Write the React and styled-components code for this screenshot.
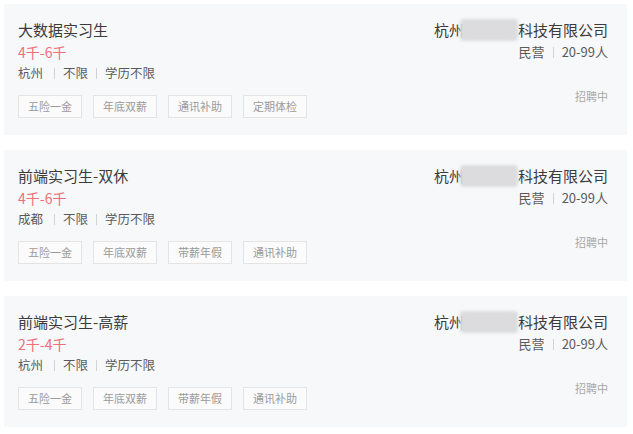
import React from "react";
import styled, { createGlobalStyle } from "styled-components";

const GlobalStyle = createGlobalStyle`
  body {
    margin: 0;
    background: #ffffff;
    font-family: "Noto Sans CJK SC", "Noto Sans", "Liberation Sans", sans-serif;
  }
`;

const jobs = [
  {
    title: "大数据实习生",
    salary: "4千-6千",
    city: "杭州",
    tags: ["五险一金", "年底双薪", "通讯补助", "定期体检"],
  },
  {
    title: "前端实习生-双休",
    salary: "4千-6千",
    city: "成都",
    tags: ["五险一金", "年底双薪", "带薪年假", "通讯补助"],
  },
  {
    title: "前端实习生-高薪",
    salary: "2千-4千",
    city: "杭州",
    tags: ["五险一金", "年底双薪", "带薪年假", "通讯补助"],
  },
];

export default function App() {
  return (
    <>
      <GlobalStyle />
      <List>
        {jobs.map((job, i) => (
          <Card key={i}>
            <Left>
              <Title>{job.title}</Title>
              <Salary>{job.salary}</Salary>
              <Meta>
                <span>{job.city}</span>
                <Sep $wide />
                <span>不限</span>
                <Sep />
                <span>学历不限</span>
              </Meta>
              <Tags>
                {job.tags.map((t) => (
                  <Tag key={t}>{t}</Tag>
                ))}
              </Tags>
            </Left>
            <Right>
              <Company>
                杭州
                <Blur />
                科技有限公司
              </Company>
              <CompanyMeta>
                民营
                <Sep />
                20-99人
              </CompanyMeta>
              <Status>招聘中</Status>
            </Right>
          </Card>
        ))}
      </List>
    </>
  );
}

const List = styled.div`
  display: flex;
  flex-direction: column;
  gap: 15px;
  padding: 4px 6px 0 4px;
`;

const Card = styled.div`
  display: flex;
  justify-content: space-between;
  height: 131px;
  box-sizing: border-box;
  padding: 15px 19px 0 14px;
  background: #f7f8fa;
`;

const Left = styled.div`
  display: flex;
  flex-direction: column;
`;

const Title = styled.div`
  font-size: 15px;
  line-height: 22px;
  color: #3b3b3b;
`;

const Salary = styled.div`
  font-size: 14px;
  line-height: 22px;
  color: #f06e78;
`;

const Meta = styled.div`
  display: flex;
  align-items: center;
  font-size: 12.5px;
  line-height: 20px;
  color: #5a5a5a;
`;

const Sep = styled.i`
  display: inline-block;
  width: 1px;
  height: 11px;
  margin: ${(p) => (p.$wide ? "0 8px 0 11px" : "0 8px")};
  background: #d2d2d2;
`;

const Tags = styled.div`
  display: flex;
  gap: 11px;
  margin-top: 12px;
`;

const Tag = styled.span`
  height: 23px;
  box-sizing: border-box;
  padding: 0 9px;
  border: 1px solid #e4e4e4;
  background: #fbfbfc;
  font-size: 11px;
  line-height: 21px;
  color: #9a9a9a;
`;

const Right = styled.div`
  display: flex;
  flex-direction: column;
  align-items: flex-end;
`;

const Company = styled.div`
  display: flex;
  align-items: center;
  font-size: 15px;
  line-height: 22px;
  color: #3b3b3b;
`;

const Blur = styled.span`
  display: inline-block;
  width: 58px;
  height: 22px;
  margin: 0 0 0 -4px;
  border-radius: 4px;
  background: #dcdcde;
  filter: blur(1.5px);
`;

const CompanyMeta = styled.div`
  display: flex;
  align-items: center;
  font-size: 13px;
  line-height: 22px;
  color: #5a5a5a;
`;

const Status = styled.div`
  margin-top: 25px;
  font-size: 11px;
  line-height: 16px;
  color: #a8a8a8;
`;
